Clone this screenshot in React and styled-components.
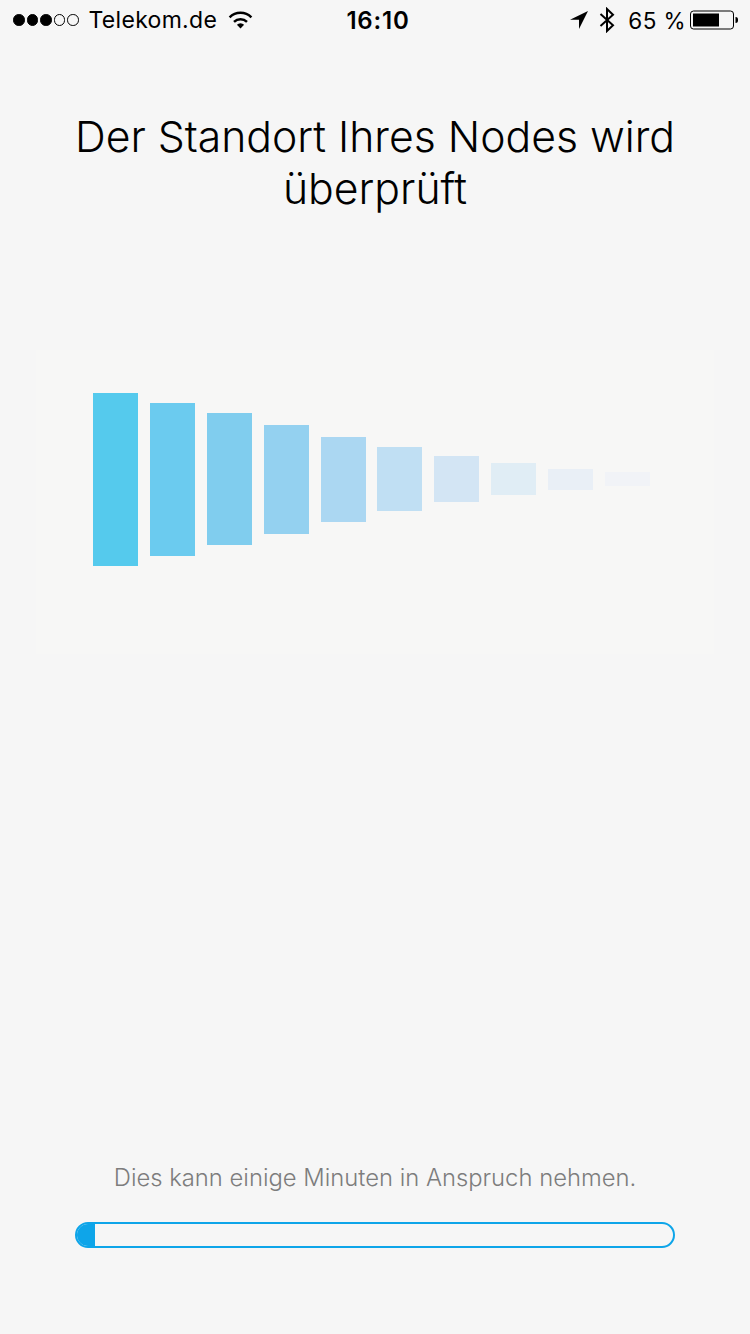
import React from 'react';
import styled, { createGlobalStyle } from 'styled-components';

const GlobalStyle = createGlobalStyle`
  html, body {
    margin: 0;
    padding: 0;
    background: #f6f6f6;
  }
`;

const bars = [
  { height: 173, color: '#55caed' },
  { height: 153, color: '#6bcbef' },
  { height: 132, color: '#80cdee' },
  { height: 109, color: '#94d1f0' },
  { height: 85, color: '#abd7f2' },
  { height: 64, color: '#c0dff3' },
  { height: 46, color: '#d3e5f4' },
  { height: 32, color: '#e0edf5' },
  { height: 21, color: '#e9eff6' },
  { height: 14, color: '#f1f3f7' },
];

const Page = styled.div`
  width: 750px;
  height: 1334px;
  overflow: hidden;
  display: flex;
  flex-direction: column;
  background: #f6f6f6;
  color: #000;
  font-family: 'Inter', 'Liberation Sans', sans-serif;
`;

const StatusBar = styled.div`
  height: 40px;
  padding: 0 11px 0 13px;
  display: grid;
  grid-template-columns: 1fr auto 1fr;
  align-items: center;
  font-size: 23px;
  box-sizing: border-box;
`;

const StatusGroup = styled.div`
  display: flex;
  align-items: center;
  justify-content: ${props => (props.end ? 'flex-end' : 'flex-start')};
`;

const Signal = styled.div`
  display: flex;
  gap: 2px;
  margin-right: 10px;
`;

const Dot = styled.span`
  width: 11.5px;
  height: 11.5px;
  border-radius: 50%;
  box-sizing: border-box;
  border: 1px solid #000;
  background: ${props => (props.filled ? '#000' : 'transparent')};
`;

const Carrier = styled.span`
  font-weight: 400;
  letter-spacing: 0.3px;
`;

const Clock = styled.span`
  margin-left: 4px;
  font-weight: 600;
  font-size: 24px;
  letter-spacing: 0.8px;
`;

const Percent = styled.span`
  font-size: 22.5px;
  letter-spacing: 0.4px;
  margin: 0 4px 0 13px;
`;

const Title = styled.h1`
  margin: 71px 0 0;
  font-family: 'Inter', sans-serif;
  font-weight: 300;
  font-size: 42.7px;
  line-height: 52px;
  text-align: center;
  padding: 0 60px;
`;

const Graphic = styled.div`
  margin: 135px 36px 0;
  height: 304px;
  box-sizing: border-box;
  padding: 0 0 46px 57.45px;
  background: #f7f7f6;
  display: flex;
  align-items: center;
  gap: 11.8px;
`;

const Bar = styled.div`
  width: 45px;
  height: ${props => props.h}px;
  background: ${props => props.color};
`;

const Footer = styled.div`
  margin-top: auto;
  padding: 0 75px 86px;
  display: flex;
  flex-direction: column;
  gap: 28px;
`;

const Hint = styled.div`
  font-weight: 300;
  font-size: 23.8px;
  line-height: 32px;
  color: #7d7d7d;
  text-align: center;
  white-space: nowrap;
`;

const Track = styled.div`
  height: 26px;
  box-sizing: border-box;
  border: 2px solid #0ea5e9;
  border-radius: 13px;
  overflow: hidden;
`;

const Fill = styled.div`
  height: 100%;
  background: #0ea5e9;
`;

const WifiIcon = styled.svg`
  margin-left: 11px;
`;

const BluetoothIcon = styled.svg`
  margin-left: 11px;
`;

const Wifi = () => (
  <WifiIcon width="25" height="18" viewBox="0 0 25 18">
    <path d="M12.500 17.500 8.900 13.700a5 5 0 0 1 7.200 0Z" fill="#000" />
    <path d="M6 10.800a9.400 9.400 0 0 1 13 0" fill="none" stroke="#000" strokeWidth="2.500" />
    <path d="M1.600 6.300a15.600 15.600 0 0 1 21.800 0" fill="none" stroke="#000" strokeWidth="2.500" />
  </WifiIcon>
);

const LocationArrow = () => (
  <svg width="18" height="18" viewBox="0 0 18 18">
    <path d="M18 0 0 8.800h9V18Z" fill="#000" />
  </svg>
);

const Bluetooth = () => (
  <BluetoothIcon width="16" height="26" viewBox="0 0 16 26">
    <path d="M1.500 7 14 18.200 8 24V2l6 5.800L1.500 19" fill="none" stroke="#000" strokeWidth="2" />
  </BluetoothIcon>
);

const Battery = () => (
  <svg width="49" height="20" viewBox="0 0 49 20">
    <rect x="0.500" y="1" width="43" height="18" rx="3" fill="none" stroke="#000" />
    <rect x="3" y="3.500" width="26" height="13" fill="#000" />
    <path d="M45.500 7c2 0 2.500 1 2.500 3s-.5 3-2.500 3Z" fill="#000" />
  </svg>
);

export default function App() {
  return (
    <Page>
      <GlobalStyle />
      <StatusBar>
        <StatusGroup>
          <Signal>
            {[true, true, true, false, false].map((filled, i) => (
              <Dot key={i} filled={filled} />
            ))}
          </Signal>
          <Carrier>Telekom.de</Carrier>
          <Wifi />
        </StatusGroup>
        <Clock>16:10</Clock>
        <StatusGroup end>
          <LocationArrow />
          <Bluetooth />
          <Percent>65 %</Percent>
          <Battery />
        </StatusGroup>
      </StatusBar>
      <Title>Der Standort Ihres Nodes wird überprüft</Title>
      <Graphic>
        {bars.map(bar => (
          <Bar key={bar.height} h={bar.height} color={bar.color} />
        ))}
      </Graphic>
      <Footer>
        <Hint>Dies kann einige Minuten in Anspruch nehmen.</Hint>
        <Track>
          <Fill style={{ width: `${(18 / 596) * 100}%` }} />
        </Track>
      </Footer>
    </Page>
  );
}
